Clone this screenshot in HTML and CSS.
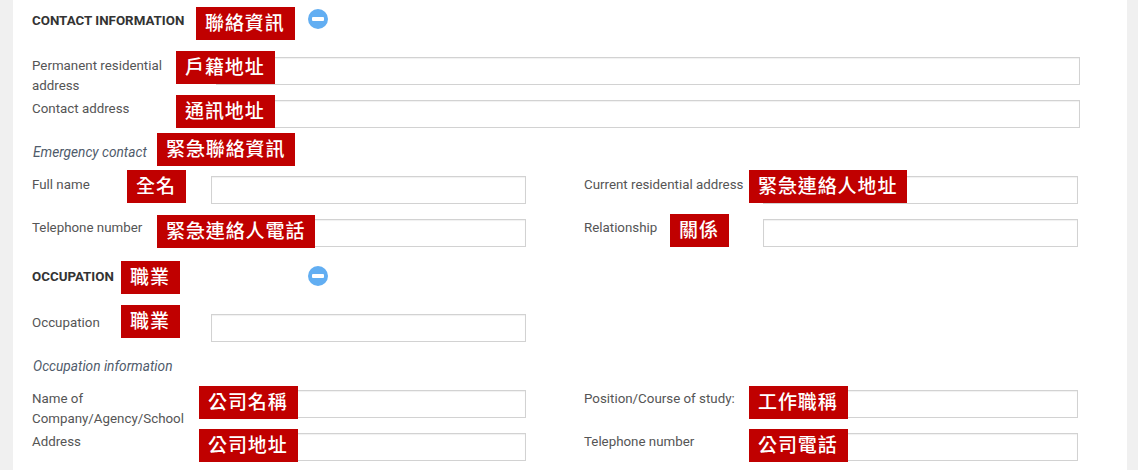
FILE: index.html
```html
<!DOCTYPE html>
<html lang="en">
<head>
<meta charset="utf-8">
<title>Contact information</title>
<link rel="stylesheet" href="styles.css">
</head>
<body>
<main class="sheet">
  <section class="heading heading-first">
    <h2 class="title">CONTACT INFORMATION</h2>
    <span class="minus minus-first"></span>
    <span class="tag t-contact">聯絡資訊</span>
  </section>
  <div class="row">
    <label class="label label-wide">Permanent residential address</label>
    <input class="field field-full">
    <span class="tag t-permanent">戶籍地址</span>
  </div>
  <div class="row">
    <label class="label label-wide">Contact address</label>
    <input class="field field-full">
    <span class="tag t-address">通訊地址</span>
  </div>
  <div class="sub">
    <em class="sub-text">Emergency contact</em>
    <span class="tag t-emergency">緊急聯絡資訊</span>
  </div>
  <div class="row">
    <div class="half">
      <label class="label">Full name</label><input class="field">
      <span class="tag t-name">全名</span>
    </div>
    <div class="half half-right">
      <label class="label">Current residential address</label><input class="field">
      <span class="tag t-current">緊急連絡人地址</span>
    </div>
  </div>
  <div class="row">
    <div class="half">
      <label class="label">Telephone number</label><input class="field">
      <span class="tag t-phone">緊急連絡人電話</span>
    </div>
    <div class="half half-right">
      <label class="label">Relationship</label><input class="field">
      <span class="tag t-relation">關係</span>
    </div>
  </div>
  <section class="heading">
    <h2 class="title">OCCUPATION</h2>
    <span class="minus"></span>
    <span class="tag t-occ-head">職業</span>
  </section>
  <div class="row">
    <div class="half">
      <label class="label">Occupation</label><input class="field">
      <span class="tag t-occ">職業</span>
    </div>
  </div>
  <div class="sub">
    <em class="sub-text">Occupation information</em>
  </div>
  <div class="row">
    <div class="half">
      <label class="label">Name of Company/Agency/School</label><input class="field">
      <span class="tag t-company">公司名稱</span>
    </div>
    <div class="half half-right">
      <label class="label">Position/Course of study:</label><input class="field">
      <span class="tag t-position">工作職稱</span>
    </div>
  </div>
  <div class="row">
    <div class="half">
      <label class="label">Address</label><input class="field">
      <span class="tag t-company-addr">公司地址</span>
    </div>
    <div class="half half-right">
      <label class="label">Telephone number</label><input class="field">
      <span class="tag t-company-tel">公司電話</span>
    </div>
  </div>
</main>
</body>
</html>
```
FILE: styles.css
```css
html, body {
  margin: 0;
  height: 100%;
  overflow: hidden;
  background: #f0f0f0;
}
.sheet {
  box-sizing: border-box;
  width: 1114px;
  height: 470px;
  margin-left: 13px;
  padding: 4px 0 0 19px;
  background: #fff;
  overflow: hidden;
  font-family: Roboto, "Liberation Sans", sans-serif;
  font-size: 13.33px;
  line-height: 20px;
  color: #555;
}
.heading {
  position: relative;
  display: flex;
  align-items: center;
  height: 34px;
  margin-bottom: 18px;
}
.heading-first {
  margin-bottom: 17px;
}
.title {
  width: 276px;
  margin: 0;
  font-size: 13.33px;
  font-weight: 700;
  color: #333;
}
.minus {
  position: relative;
  width: 20px;
  height: 20px;
  margin-top: -2px;
  border-radius: 50%;
  background: #62aef2;
}
.minus-first {
  margin-top: -5px;
}
.minus::after {
  content: "";
  position: absolute;
  left: 4px;
  top: 8px;
  width: 12px;
  height: 4px;
  border-radius: 1px;
  background: #fff;
}
.row {
  position: relative;
  display: flex;
  height: 43px;
}
.half {
  display: flex;
  width: 494px;
}
.half-right {
  margin-left: 58px;
}
.label {
  box-sizing: border-box;
  flex: none;
  width: 179px;
  padding-top: 1px;
}
.label-wide {
  width: 184px;
  padding-right: 20px;
}
.field {
  box-sizing: border-box;
  flex: none;
  width: 315px;
  height: 28px;
  margin: 2px 0 0;
  padding: 0;
  border: 1px solid #d2d2d2;
  border-radius: 0;
  background: #fff;
  box-shadow: inset 0 1px 1px rgba(0, 0, 0, .06);
}
.field-full {
  width: 864px;
}
.sub {
  position: relative;
  height: 20px;
  margin-bottom: 13px;
  font-size: 13.7px;
  line-height: 20px;
  color: #4f5b6b;
}
.sub-text {
  display: block;
  padding: 0 0 0 1px;
  transform: translateY(.6px);
}
.tag {
  position: absolute;
  box-sizing: border-box;
  height: 33px;
  padding: 0 10px 0 9px;
  background: #c00000;
  color: #fff;
  font-family: "Noto Sans CJK TC", sans-serif;
  font-size: 19px;
  font-style: normal;
  font-weight: 500;
  line-height: 30px;
  letter-spacing: .9px;
  white-space: nowrap;
}
.t-contact { left: 164px; top: 3px; }
.t-permanent { left: 144px; top: -4px; }
.t-address { left: 144px; top: -3px; }
.t-emergency { left: 125px; top: -8px; }
.t-name { left: 95px; top: -4px; }
.t-current { left: 717px; top: -4px; }
.t-phone { left: 125px; top: -2px; }
.t-relation { left: 638px; top: -3px; }
.t-occ-head { left: 89px; top: 1px; }
.t-occ { left: 89px; top: -7px; }
.t-company { left: 167px; top: -2px; }
.t-position { left: 717px; top: -2px; }
.t-company-addr { left: 167px; top: -2px; }
.t-company-tel { left: 717px; top: -2px; }
```
